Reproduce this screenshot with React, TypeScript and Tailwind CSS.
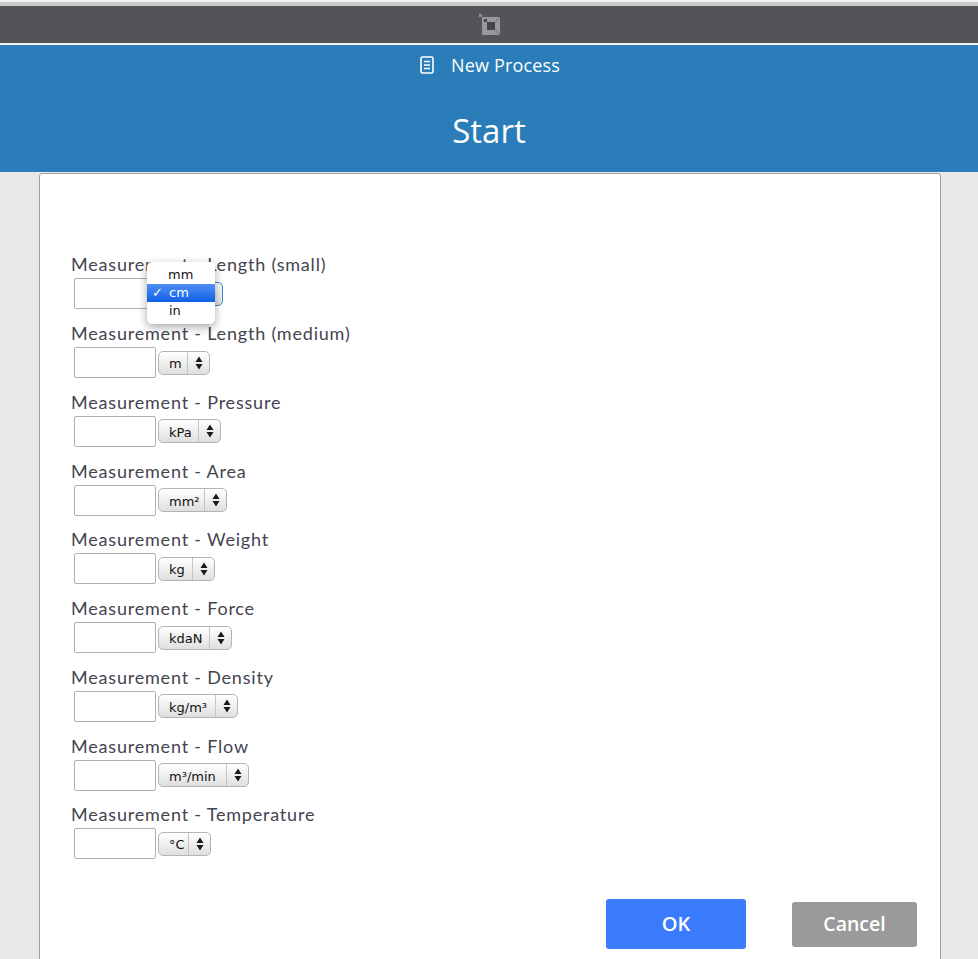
// New Process — start form with measurement fields

const fields = [
  { label: "Length (small)", unit: "cm", w: "w-[65px]", open: true },
  { label: "Length (medium)", unit: "m", w: "w-[52px]" },
  { label: "Pressure", unit: "kPa", w: "w-[63px]" },
  { label: "Area", unit: "mm²", w: "w-[69px]" },
  { label: "Weight", unit: "kg", w: "w-[57px]" },
  { label: "Force", unit: "kdaN", w: "w-[74px]" },
  { label: "Density", unit: "kg/m³", w: "w-[80px]" },
  { label: "Flow", unit: "m³/min", w: "w-[91px]" },
  { label: "Temperature", unit: "°C", w: "w-[53px]" },
]

function Stepper() {
  return (
    <svg width="8" height="14" viewBox="0 0 8 14" className="text-[#1a1a1a]">
      <path d="M4 0.5 L7.5 6 H0.5 Z M4 13.5 L7.5 8 H0.5 Z" fill="currentColor" />
    </svg>
  )
}

function UnitSelect({ unit, w, open }: { unit: string; w: string; open?: boolean }) {
  return (
    <div
      className={`${w} h-[24px] flex items-center rounded-[5px] border bg-gradient-to-b from-[#ffffff] to-[#dfdfdf] text-[13px] text-[#111] font-['DejaVu_Sans',sans-serif] ${
        open ? "border-[#3a8ccf]" : "border-[#b4b4b4]"
      }`}
    >
      <span className="flex-1 pl-[10px] pt-[2px] leading-none whitespace-nowrap">{unit}</span>
      <span className="w-[22px] h-full shrink-0 flex items-center justify-center border-l border-[#c4c4c4]">
        <Stepper />
      </span>
    </div>
  )
}

function UnitMenu() {
  return (
    <div className="absolute left-[147px] top-[262px] w-[68px] h-[62px] pt-[4px] bg-white rounded-[5px] shadow-[0_3px_10px_rgba(0,0,0,0.35)] text-[13px] text-[#111] font-['DejaVu_Sans',sans-serif]">
      <div className="h-[18px] pl-[21px] leading-[18px]">mm</div>
      <div className="relative h-[18px] pl-[22px] leading-[18px] text-white bg-gradient-to-b from-[#4f8ff5] to-[#0a5fe8]">
        <span className="absolute left-[5px] top-0 text-[13px] font-bold">✓</span>
        cm
      </div>
      <div className="h-[18px] pl-[22px] leading-[18px]">in</div>
    </div>
  )
}

export default function App() {
  return (
    <div className="relative h-[959px] overflow-hidden bg-[#e8e8e8] font-['Open_Sans',sans-serif]">
      {/* 顶部工具条 */}
      <div className="h-[2px] bg-[#f2f2f2]" />
      <div className="h-[4px] bg-[#c9c9c9]" />
      <div className="h-[37px] pl-[2px] bg-[#545359] flex items-center justify-center">
        <svg width="24" height="24" viewBox="0 0 24 24">
          <rect x="1" y="1" width="3" height="3" fill="#8e8d91" />
          <rect x="4" y="4" width="18" height="18" fill="#98979b" />
          <rect x="9" y="9" width="8" height="8" fill="#46454a" />
          <rect x="6" y="6" width="3" height="3" fill="#46454a" />
          <path d="M17 9 L22 4 M17 17 L22 22" stroke="#6f6e73" strokeWidth="1" />
        </svg>
      </div>
      <div className="h-[2px] bg-[#f0f0f0]" />

      {/* 标题区 */}
      <header className="h-[127px] bg-[#2a7db8] text-white flex flex-col items-center">
        <div className="h-[40px] ml-[2px] flex items-center gap-[17px] text-[18px] tracking-[0.15px]">
          <svg width="14" height="18" viewBox="0 0 14 18" fill="none" stroke="white" strokeWidth="1.6">
            <rect x="1" y="1" width="12" height="16" rx="1.5" />
            <path d="M4 5.5 H10 M4 9 H10 M4 12.5 H10" />
          </svg>
          <span>New Process</span>
        </div>
        <h1 className="mt-[11px] text-[33px] leading-[70px] font-normal">Start</h1>
      </header>

      {/* 表单卡片 */}
      <main className="ml-[39px] mr-[37px] mt-[1px] h-[800px] bg-white border border-[#a0a0a0] rounded-t-[3px] pt-[80.25px] pl-[31px]">
        <div className="grid auto-rows-[68.75px]">
          {fields.map((f) => (
            <div key={f.label}>
              <div className="h-[24px] leading-[20px] text-[18px] tracking-[0.8px] text-[#44444f] font-['Lato',sans-serif]">
                Measurement - {f.label}
              </div>
              <div className="flex items-center gap-[2px] ml-[3px]">
                <div className="w-[82px] h-[31px] border border-[#b0b0b0] rounded-[2px] bg-white" />
                <UnitSelect unit={f.unit} w={f.w} open={f.open} />
              </div>
            </div>
          ))}
        </div>
        <div className="absolute left-[606px] top-[899px] flex items-center gap-[46px] text-white font-semibold">
          <button className="w-[140px] h-[50px] rounded-[3px] bg-[#3b7cff] text-[20px]">OK</button>
          <button className="w-[125px] h-[45px] rounded-[3px] bg-[#9a9a9a] text-[19.5px]">Cancel</button>
        </div>
      </main>

      <UnitMenu />
    </div>
  )
}
